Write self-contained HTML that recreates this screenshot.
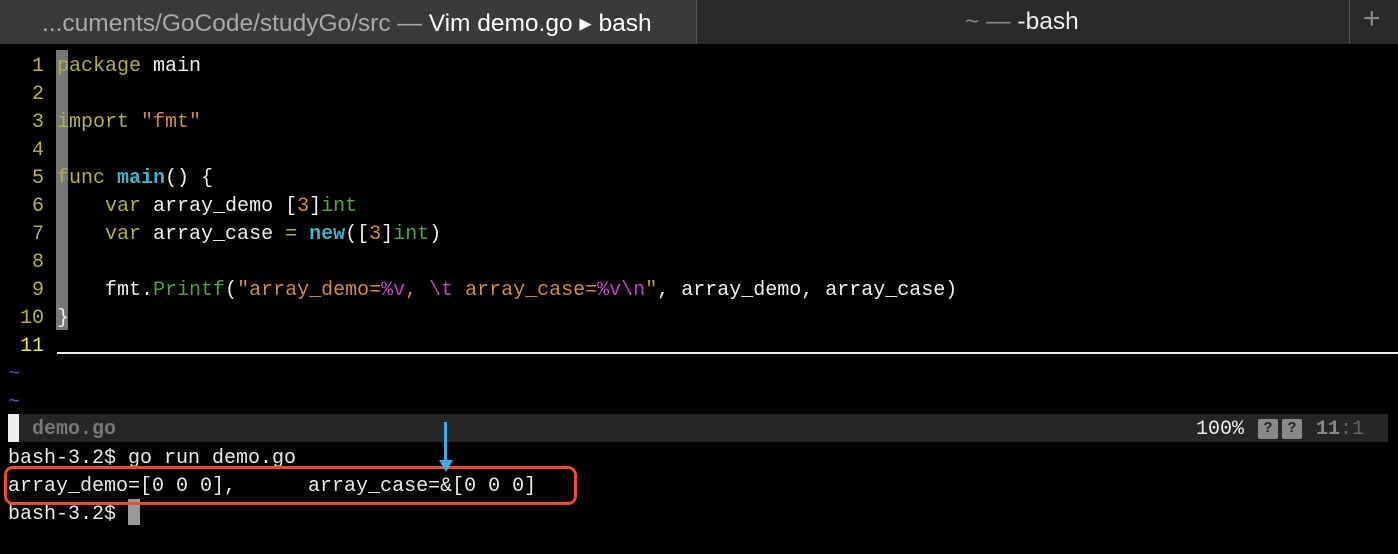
<!DOCTYPE html>
<html><head><meta charset="utf-8"><style>
*{margin:0;padding:0;box-sizing:border-box}
body{width:1398px;height:554px;background:#000;overflow:hidden;position:relative;font-family:"Liberation Mono",monospace;font-size:20px;color:#e8e8e8}
.tabs{position:absolute;left:0;top:0;width:1398px;height:44px;background:#2a2a2c;font-family:"Liberation Sans",sans-serif;font-size:24.5px}
.t1{position:absolute;left:0;top:0;width:697px;height:44px;background:#3a3a3c;border-right:1px solid #555}
.t1 span,.t2 span{position:absolute;top:8px;white-space:nowrap}
.t2{position:absolute;left:697px;top:0;width:653px;height:44px;border-right:1px solid #555}
.plus{position:absolute;left:1363px;top:2px;color:#888;font-size:30px;font-weight:300}
.ln{position:absolute;height:28px;line-height:28px;white-space:pre;transform:translateY(2px)}
.num{position:absolute;width:44px;text-align:right;left:0;color:#b5b53a;line-height:28px;height:28px;transform:translateY(2px)}
.y{color:#b0b03a}.w{color:#eee}.o{color:#d08a3a}.g{color:#4aa83a}.c{color:#40b0c8;font-weight:bold}.m{color:#c040c8}
</style></head><body>
<div class="tabs">
<div class="t1"><span style="left:42px;color:#a8a8a8">...cuments/GoCode/studyGo/src — <span style="position:static;color:#fff">Vim demo.go ▸ bash</span></span></div>
<div class="t2"><span style="left:268px;color:#888">~ — <span style="position:static;color:#eee">-bash</span></span></div>
<div class="plus">+</div>
</div>
<div style="position:absolute;left:56px;top:50px;width:12px;height:280px;background:#777"></div>
<div style="position:absolute;left:57px;top:352px;width:1341px;height:2px;background:#eee"></div>
<div class="num" style="top:51px">1</div><div class="ln" style="top:51px;left:57px"><span class="y">package</span> <span class="w">main</span></div>
<div class="num" style="top:79px">2</div>
<div class="num" style="top:107px">3</div><div class="ln" style="top:107px;left:57px"><span class="y">import</span> <span class="o">"fmt"</span></div>
<div class="num" style="top:135px">4</div>
<div class="num" style="top:163px">5</div><div class="ln" style="top:163px;left:57px"><span class="y">func</span> <span class="c">main</span><span class="w">() {</span></div>
<div class="num" style="top:191px">6</div><div class="ln" style="top:191px;left:57px">    <span class="y">var</span> <span class="w">array_demo [</span><span class="o">3</span><span class="w">]</span><span class="g">int</span></div>
<div class="num" style="top:219px">7</div><div class="ln" style="top:219px;left:57px">    <span class="y">var</span> <span class="w">array_case</span> <span class="y">=</span> <span class="c">new</span><span class="w">([</span><span class="o">3</span><span class="w">]</span><span class="g">int</span><span class="w">)</span></div>
<div class="num" style="top:247px">8</div>
<div class="num" style="top:275px">9</div><div class="ln" style="top:275px;left:57px">    <span class="w">fmt.</span><span class="g">Printf</span><span class="w">(</span><span class="o">"array_demo=</span><span class="m">%v</span><span class="o">, </span><span class="m">\t</span><span class="o"> array_case=</span><span class="m">%v\n</span><span class="o">"</span><span class="w">, array_demo, array_case)</span></div>
<div class="num" style="top:303px">10</div><div class="ln" style="top:303px;left:57px"><span class="w">}</span></div>
<div class="num" style="top:331px;color:#e8e830">11</div>
<div class="ln" style="top:359px;left:8px;color:#5050e0">~</div>
<div class="ln" style="top:387px;left:8px;color:#5050e0">~</div>
<div style="position:absolute;left:8px;top:414px;width:1380px;height:28px;background:#262626"></div>
<div style="position:absolute;left:8px;top:414px;width:11px;height:28px;background:#eee"></div>
<div class="ln" style="top:414px;left:32px;color:#777;font-weight:bold">demo.go</div>
<div class="ln" style="top:414px;left:1196px;color:#eee">100%</div>
<div style="position:absolute;left:1258px;top:419px;width:20px;height:20px;background:#888;border-radius:2px;color:#262626;font-size:15px;font-weight:bold;text-align:center;line-height:20px">?</div>
<div style="position:absolute;left:1282px;top:419px;width:20px;height:20px;background:#888;border-radius:2px;color:#262626;font-size:15px;font-weight:bold;text-align:center;line-height:20px">?</div>
<div class="ln" style="top:414px;left:1316px;color:#888;font-weight:bold">11<span style="font-weight:normal;color:#666">:1</span></div>
<div class="ln" style="top:443px;left:8px">bash-3.2$ go run demo.go</div>
<div class="ln" style="top:471px;left:8px">array_demo=[0 0 0],      array_case=&amp;[0 0 0]</div>
<div class="ln" style="top:499px;left:8px">bash-3.2$ </div>
<div style="position:absolute;left:128px;top:499px;width:12px;height:26px;background:#999"></div>
<div style="position:absolute;left:4px;top:466px;width:573px;height:39px;border:3px solid #e8502a;border-radius:9px"></div>
<div style="position:absolute;left:444px;top:422px;width:3px;height:42px;background:#3aaae8"></div>
<div style="position:absolute;left:439px;top:460px;width:0;height:0;border-left:7px solid transparent;border-right:7px solid transparent;border-top:12px solid #3aaae8"></div>
</body></html>
